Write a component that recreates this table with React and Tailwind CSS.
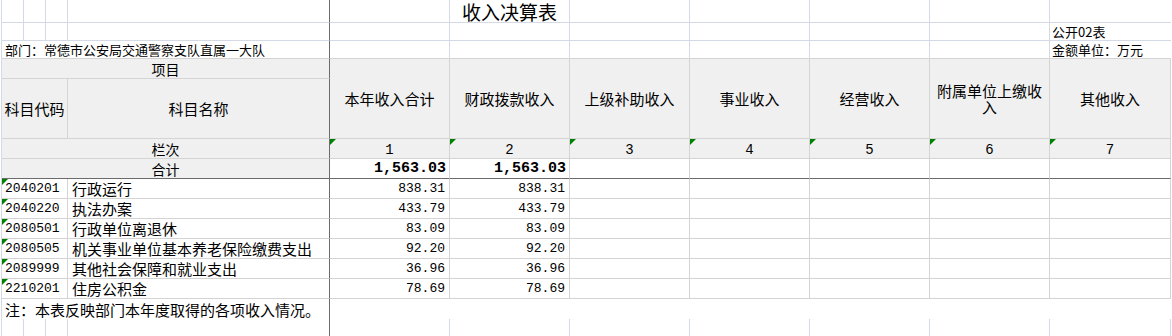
import React from "react";

const cjk = "font-['Noto_Sans_CJK_SC',sans-serif]";
const mono = "font-['Liberation_Mono','Noto_Sans_CJK_SC',monospace]";

const headers = ["本年收入合计", "财政拨款收入", "上级补助收入", "事业收入", "经营收入", "附属单位上缴收入", "其他收入"];

const rows = [
  ["2040201", "行政运行", "838.31"],
  ["2040220", "执法办案", "433.79"],
  ["2080501", "行政单位离退休", "83.09"],
  ["2080505", "机关事业单位基本养老保险缴费支出", "92.20"],
  ["2089999", "其他社会保障和就业支出", "36.96"],
  ["2210201", "住房公积金", "78.69"],
];

// gridline styles
const blueCell = "border-r border-b border-[#d3dae5]";
const frozenTop = "border-r border-b border-r-[#6b6b6b] border-b-[#d3dae5]";
const grayCell = "border-r border-b border-[#d4d4d4]";
const frozenGray = "border-r border-b border-r-[#6b6b6b] border-b-[#d4d4d4]";

function Mark() {
  return <span className="absolute left-0 top-0 w-0 h-0 border-t-[6px] border-r-[6px] border-t-[#008000] border-r-transparent" />;
}

export default function App() {
  const six = [0, 1, 2, 3, 4, 5];
  return (
    <div className={`w-[1172px] h-[336px] bg-white overflow-hidden text-black ${cjk}`}>
      <div className="ml-px border-l border-[#d3dae5] grid grid-cols-[22px_22px_22px_262px_120px_120px_120px_120px_120px_120px_121px] grid-rows-[23px_18px_18px_20px_60px_20px_20px_20px_20px_20px_20px_20px_20px_20px_17px]">
        {/* row 1 : title */}
        <div className={blueCell} />
        <div className={blueCell} />
        <div className={blueCell} />
        <div className={frozenTop} />
        <div className={blueCell} />
        <div className={`${blueCell} pt-[2px] text-center text-[19px] leading-[19px] whitespace-nowrap`}>收入决算表</div>
        <div className={blueCell} />
        <div className={blueCell} />
        <div className={blueCell} />
        <div className={blueCell} />
        <div className="border-b border-[#d3dae5]" />

        {/* row 2 */}
        <div className={blueCell} />
        <div className={blueCell} />
        <div className={blueCell} />
        <div className={frozenTop} />
        {six.map((i) => (
          <div key={i} className={blueCell} />
        ))}
        <div className="border-b border-[#d3dae5] flex items-center pl-[2px] text-[13px] leading-none">公开02表</div>

        {/* row 3 */}
        <div className={`col-span-4 ${frozenGray} flex items-center pl-[3px] text-[13px] leading-none whitespace-nowrap`}>
          部门：常德市公安局交通警察支队直属一大队
        </div>
        {six.map((i) => (
          <div key={i} className="border-r border-b border-r-[#d3dae5] border-b-[#d4d4d4]" />
        ))}
        <div className="border-b border-[#d4d4d4] flex items-center pl-[2px] text-[13px] leading-none">金额单位：万元</div>

        {/* header */}
        <div className={`col-span-4 bg-[#f0f0f0] ${frozenGray} flex items-center justify-center text-[14px] leading-none`}>项目</div>
        {headers.map((h) => (
          <div key={h} className={`row-span-2 bg-[#f0f0f0] ${grayCell} flex items-center justify-center text-center px-1 text-[15px] leading-[16px]`}>
            {h}
          </div>
        ))}
        <div className={`col-span-3 bg-[#f0f0f0] ${grayCell} flex items-center justify-center text-[15px] leading-none whitespace-nowrap`}>科目代码</div>
        <div className={`bg-[#f0f0f0] ${frozenGray} flex items-center justify-center text-[15px] leading-none`}>科目名称</div>

        <div className={`col-span-4 bg-[#f0f0f0] ${frozenGray} flex items-center justify-center text-[14px] leading-none`}>栏次</div>
        {headers.map((h, i) => (
          <div key={h} className={`relative bg-[#f0f0f0] ${grayCell} flex items-center justify-center ${mono} text-[14px] leading-none pt-[2px]`}>
            <Mark />
            {i + 1}
          </div>
        ))}

        <div className="col-span-4 bg-[#f0f0f0] border-r border-b border-[#6b6b6b] flex items-center justify-center text-[14px] leading-none">合计</div>
        <div className={`border-r border-b border-r-[#d4d4d4] border-b-[#6b6b6b] flex items-center justify-end pr-[3px] ${mono} text-[15px] font-bold leading-none`}>1,563.03</div>
        <div className={`border-r border-b border-r-[#d4d4d4] border-b-[#6b6b6b] flex items-center justify-end pr-[3px] ${mono} text-[15px] font-bold leading-none`}>1,563.03</div>
        {[0, 1, 2, 3, 4].map((i) => (
          <div key={i} className="border-r border-b border-r-[#d4d4d4] border-b-[#6b6b6b]" />
        ))}

        {/* data rows */}
        {rows.map(([code, name, amt]) => (
          <React.Fragment key={code}>
            <div className={`relative col-span-3 ${grayCell} flex items-center pl-[3px] ${mono} text-[13px] leading-none`}>
              <Mark />
              {code}
            </div>
            <div className={`${frozenGray} flex items-center pl-1 text-[15px] leading-none whitespace-nowrap`}>{name}</div>
            <div className={`${grayCell} flex items-center justify-end pr-1 ${mono} text-[13px] leading-none`}>{amt}</div>
            <div className={`${grayCell} flex items-center justify-end pr-1 ${mono} text-[13px] leading-none`}>{amt}</div>
            {[0, 1, 2, 3, 4].map((i) => (
              <div key={i} className={grayCell} />
            ))}
          </React.Fragment>
        ))}

        {/* note */}
        <div className="col-span-4 border-r border-[#6b6b6b] flex items-center pl-[3px] text-[15px] leading-none whitespace-nowrap">
          注：本表反映部门本年度取得的各项收入情况。
        </div>
        <div className="col-span-7" />

        {/* trailing empty row */}
        <div className="border-r border-[#d3dae5]" />
        <div className="border-r border-[#d3dae5]" />
        <div className="border-r border-[#d3dae5]" />
        <div className="border-r border-[#6b6b6b]" />
        {[0, 1, 2, 3, 4, 5, 6].map((i) => (
          <div key={i} className="border-r border-[#d3dae5]" />
        ))}
      </div>
    </div>
  );
}
